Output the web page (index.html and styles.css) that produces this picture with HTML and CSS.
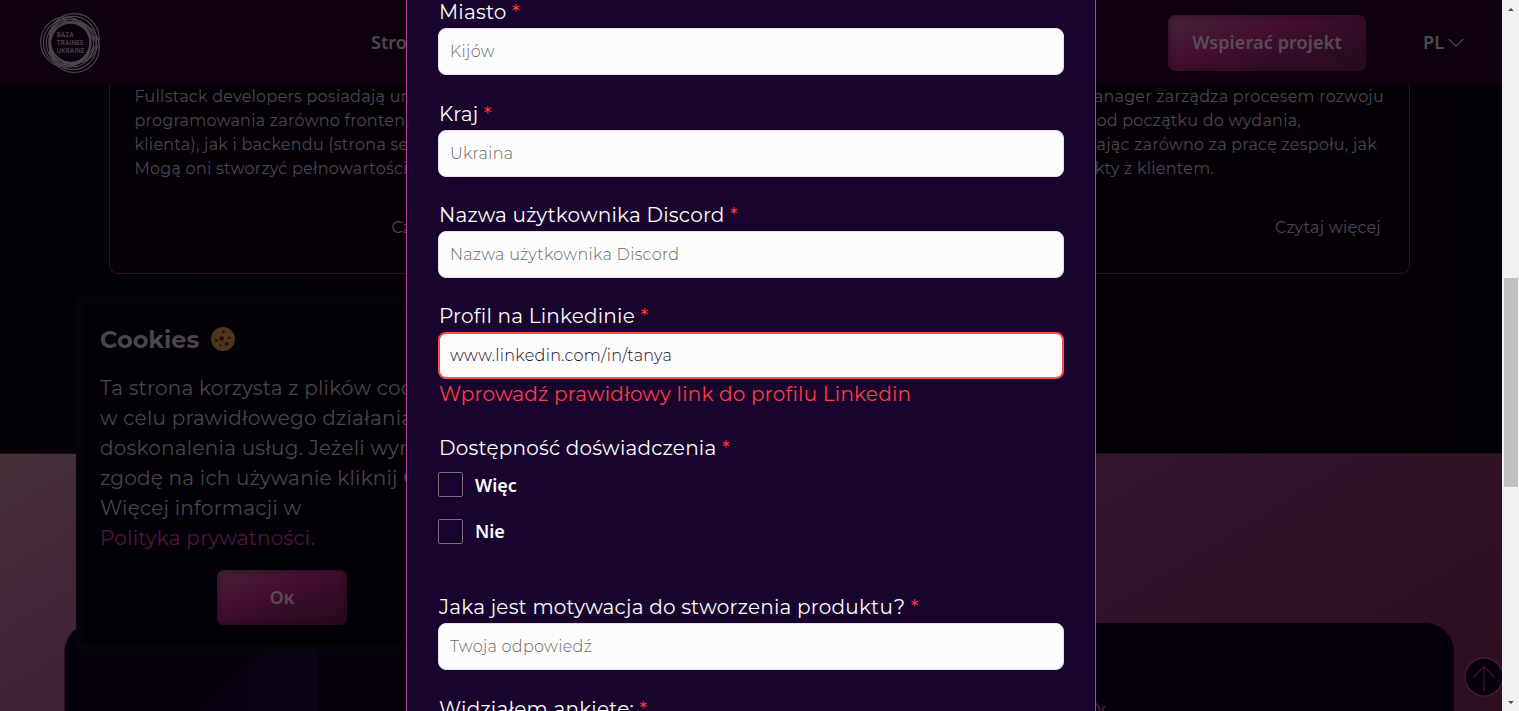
FILE: index.html
```html
<!DOCTYPE html>
<html lang="pl">
<head>
<meta charset="utf-8">
<title>Baza Trainee Ukraine</title>
<link rel="stylesheet" href="styles.css">
</head>
<body>
<div class="page">
  <header class="header">
    <svg class="logo" viewBox="0 0 60 60" width="60" height="60">
      <g class="logo-rings">
        <circle cx="34.2" cy="25.6" r="25"/><circle cx="33.1" cy="26.8" r="23.4"/><circle cx="32" cy="28" r="21.8"/><circle cx="30.8" cy="29" r="20.2"/>
        <circle cx="25.6" cy="29" r="25"/><circle cx="26.8" cy="29.5" r="23.4"/><circle cx="28" cy="30" r="21.8"/><circle cx="29" cy="30" r="20.2"/>
        <circle cx="34.3" cy="34.4" r="25"/><circle cx="33" cy="33.2" r="23.4"/><circle cx="31.8" cy="32.2" r="21.8"/><circle cx="30.5" cy="31" r="20.2"/>
      </g>
      <circle cx="30.5" cy="29.5" r="18.8" class="logo-core"/>
      <g class="logo-text">
        <text x="16.7" y="24.3" textLength="17">BAZA</text>
        <text x="16.7" y="31.9" textLength="27">TRAINEE</text>
        <text x="16.7" y="39.5" textLength="28">UKRAINE</text>
      </g>
    </svg>
    <nav class="nav">Strona</nav>
    <button class="btn btn-support">Wspierać projekt</button>
    <div class="lang"><span>PL</span>
      <svg width="16" height="10" viewBox="0 0 16 10"><path d="M.8 1 8 8.2 15.2 1" fill="none" stroke="#4a474b" stroke-width="1.2"/></svg>
    </div>
  </header>

  <section class="cards">
    <article class="card">
      <div class="lines">
        <p>Fullstack developers posiadają um</p>
        <p>programowania zarówno frontendu</p>
        <p>klienta), jak i backendu (strona ser</p>
        <p>Mogą oni stworzyć pełnowartościo</p>
      </div>
      <a class="more more-left">Czytaj</a>
    </article>
    <article class="card card-middle"></article>
    <article class="card">
      <div class="lines lines-right">
        <p>manager zarządza procesem rozwoju</p>
        <p class="line-2">od początku do wydania,</p>
        <p class="line-3">dając zarówno za pracę zespołu, jak</p>
        <p class="line-4">kty z klientem.</p>
      </div>
      <a class="more">Czytaj więcej</a>
    </article>
  </section>

  <section class="band">
    <div class="panel">
      <svg width="1389" height="88" viewBox="0 0 1389 88">
        <defs><linearGradient id="facet"><stop offset="0" stop-color="#07000f"/><stop offset="1" stop-color="#0c0414"/></linearGradient></defs>
        <path d="M133 88 230 0H252V88Z" fill="url(#facet)"/>
        <path d="M1029 80Q1036 82 1034 90M1038 90V85L1040 83" fill="none" stroke="#4a1238" stroke-width="2"/>
      </svg>
    </div>
  </section>

  <aside class="cookies">
    <h2>Cookies
      <svg width="24" height="24" viewBox="0 0 24 24"><circle cx="12" cy="12" r="12" fill="#4d351b"/><g fill="#1d110a"><circle cx="10.7" cy="11.5" r="2.3"/><circle cx="12.6" cy="5" r="1.4"/><circle cx="18.2" cy="10.8" r="1.3"/><circle cx="15.8" cy="16.7" r="1.8"/><circle cx="5.3" cy="13.5" r="1.4"/><circle cx="9.3" cy="18.3" r="1"/></g></svg>
    </h2>
    <div class="cookie-text">
      <p>Ta strona korzysta z plików coo</p>
      <p>w celu prawidłowego działania,</p>
      <p>doskonalenia usług. Jeżeli wyra</p>
      <p>zgodę na ich używanie kliknij O</p>
      <p>Więcej informacji w</p>
      <p><a class="policy">Polityka prywatności.</a></p>
    </div>
    <button class="btn btn-ok">Ок</button>
  </aside>

  <div class="to-top"><svg width="40" height="40" viewBox="0 0 40 40"><circle cx="20" cy="20" r="19" fill="#06000d" stroke="#431738" stroke-width="1.6"/><path d="M20 34.5V9.5M9 20.8 20 9.5 31 20.8" fill="none" stroke="#3a1232" stroke-width="1.3"/></svg></div>

  <form class="modal">
    <label class="field"><span class="label">Miasto <b>*</b></span><input placeholder="Kijów"></label>
    <label class="field"><span class="label">Kraj <b>*</b></span><input placeholder="Ukraina"></label>
    <label class="field"><span class="label">Nazwa użytkownika Discord <b>*</b></span><input placeholder="Nazwa użytkownika Discord"></label>
    <label class="field"><span class="label">Profil na Linkedinie <b>*</b></span><input class="invalid" value="www.linkedin.com/in/tanya"><span class="error">Wprowadź prawidłowy link do profilu Linkedin</span></label>
    <div class="field choices">
      <span class="label">Dostępność doświadczenia <b>*</b></span>
      <label class="choice"><i class="box"></i>Więc</label>
      <label class="choice"><i class="box"></i>Nie</label>
    </div>
    <label class="field"><span class="label">Jaka jest motywacja do stworzenia produktu? <b>*</b></span><input placeholder="Twoja odpowiedź"></label>
    <div class="field"><span class="label">Widziałem ankietę: <b>*</b></span></div>
  </form>
</div>
<div class="scrollbar">
  <i class="arrow up"></i>
  <i class="thumb"></i>
  <i class="arrow down"></i>
</div>
</body>
</html>
```
FILE: styles.css
```css
* { box-sizing: border-box; }
body {
  margin: 0;
  width: 1519px;
  height: 711px;
  overflow: hidden;
  display: flex;
  background: #030006;
  font-family: Montserrat, Inter, sans-serif;
}
p, h2 { margin: 0; white-space: nowrap; }

.page { position: relative; width: 1502px; height: 711px; overflow: hidden; }

.header {
  display: flex;
  align-items: center;
  height: 85px;
  padding: 0 38px 0 40px;
  background: #0e000f;
  color: #4c494c;
  font: 600 18px/24px "Noto Sans", sans-serif;
}
.logo-rings { fill: none; stroke: #4a474b; stroke-width: 1.1; }
.logo-core { fill: #0e000f; }
.logo-text { fill: #4a474b; font: 600 6px Inter, sans-serif; }
.nav { margin-left: 271px; width: 797px; padding-bottom: 2px; }

.btn {
  padding: 0 0 1px;
  border: 0;
  border-radius: 7px;
  color: #554d53;
  font: 600 18px/24px "Noto Sans", sans-serif;
  letter-spacing: .12px;
  background: linear-gradient(160deg, #452538 0%, #450e32 40%, #310d26 68%, #28081d 100%);
  box-shadow: inset 0 0 6px #260b1d;
}
.btn-support { width: 198px; height: 56px; }
.lang { display: flex; align-items: center; gap: 4px; margin-left: auto; }
.lang span { padding-bottom: 2px; }

.cards {
  display: flex;
  gap: 23px;
  height: 368px;
  padding: 0 92px 0 109px;
  background: linear-gradient(90deg, #040008, #030004 50%, #040007);
}
.card {
  flex: 1;
  min-width: 0;
  height: 189px;
  padding: 0 28px 0 24.5px;
  background: #060009;
  border: 1px solid #32102b;
  border-top: 0;
  border-radius: 0 0 9px 9px;
  color: #4a484b;
  font-size: 16px;
  line-height: 24px;
  letter-spacing: .24px;
}
.card-middle { flex: 0 0 418px; }
.lines-right { display: flex; flex-direction: column; align-items: flex-end; padding-right: 25px; margin-right: -28px; }
.line-2 { margin-right: 83px; }
.line-3 { margin-right: 7px; }
.line-4 { margin-right: 170px; }
.more { display: block; margin-top: 35px; text-align: right; }
.more-left { text-align: left; padding-left: 257px; }

.band {
  height: 258px;
  padding: 168px 47px 0 64px;
  background: linear-gradient(149deg, #453039 0%, #3f2237 22%, #3e1d33 38%, #33132a 66%, #2c0e20 100%);
  border-top: 1px solid #1d0b18;
}
.panel { height: 120px; background: #06000c; border-radius: 30px 30px 0 0; border: 1px solid #2d0f28; border-bottom: 0; overflow: hidden; }

.cookies {
  position: absolute;
  left: 76px;
  top: 297px;
  width: 412px;
  height: 353px;
  padding: 27px 24px;
  border-radius: 8px;
  background: #030007;
  box-shadow: inset 0 0 12px #0d0b11;
  color: #484649;
}
.cookies h2 { display: flex; align-items: center; gap: 12px; height: 30px; font-size: 24px; font-weight: 700; color: #484648; }
.cookie-text { margin-top: 19px; font-size: 20px; line-height: 30px; letter-spacing: .23px; }
.policy { color: #52173f; }
.btn-ok { display: block; width: 130px; height: 55px; margin: 17px 0 0 117px; }

.to-top { position: absolute; left: 1464px; top: 657px; height: 40px; }

.modal {
  position: absolute;
  left: 406px;
  top: -2.6px;
  width: 690px;
  height: 715px;
  padding: 0 31px;
  background: #18042d;
  border: solid #b5438f;
  border-width: 0 1px;
  display: flex;
  flex-direction: column;
  gap: 23.3px;
}
.field { display: block; flex: none; white-space: nowrap; }
.label, .error { display: block; height: 31px; padding-left: 1px; line-height: 31px; font-size: 20px; letter-spacing: .21px; color: #fcfcfc; }
.label b { font-weight: 400; color: #ff3b45; }
.field input {
  display: block;
  width: 626px;
  height: 47px;
  padding: 0 11px;
  border: 1px solid #e5e0e8;
  border-radius: 8px;
  background: #fcfcfc;
  color: #19052e;
  font: 300 16px Montserrat, Inter, sans-serif;
  letter-spacing: .33px;
}
.field input::placeholder { color: #686868; opacity: 1; }
.field input.invalid { border: 2px solid #ff4a50; padding: 0 10px; }
.field .error { height: 30.3px; line-height: 30.3px; color: #ff3b45; }
.choices { height: 136.3px; }
.choice { display: flex; align-items: center; gap: 12px; height: 24px; margin: 8.8px 0 22.6px; color: #fcfcfc; font: 600 18px/24px "Noto Sans", sans-serif; }
.box { width: 25px; height: 25px; border: 1px solid #77707f; border-radius: 2px; }

.scrollbar { display: flex; flex-direction: column; align-items: center; width: 17px; height: 711px; background: #f1f1f1; }
.arrow { width: 0; height: 0; border: 3px solid transparent; }
.up { margin-top: 5px; border-bottom-color: #505050; }
.thumb { width: 14px; height: 209px; margin: 267px 0 auto 1px; background: #c1c1c1; }
.down { margin-bottom: 4px; border-top-color: #505050; }
```
